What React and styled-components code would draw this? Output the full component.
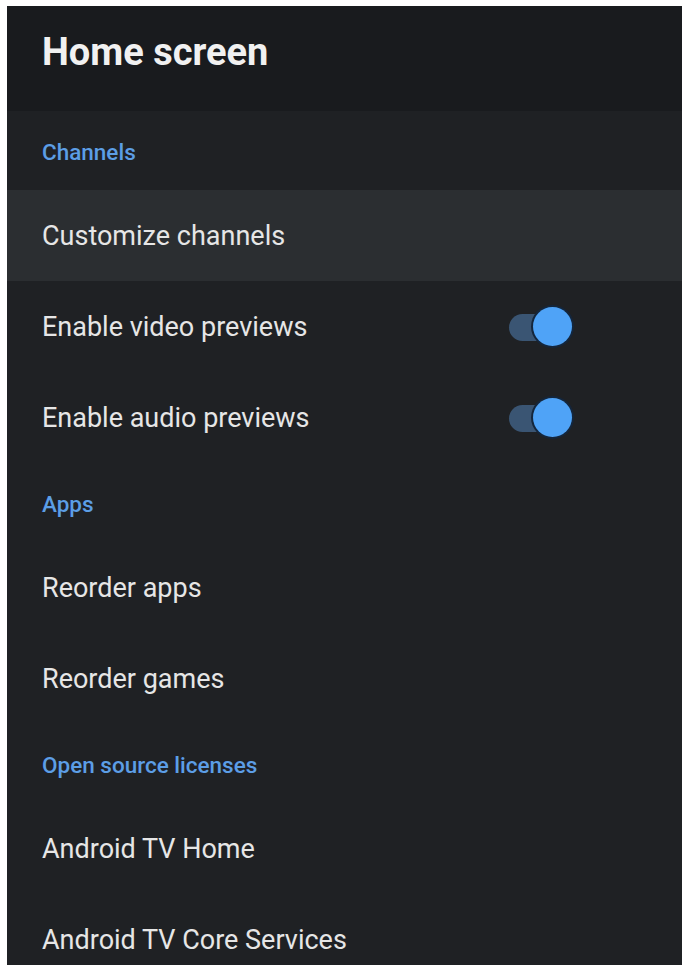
import styled, { createGlobalStyle } from 'styled-components';

const GlobalStyle = createGlobalStyle`
  html, body {
    margin: 0;
    padding: 0;
    background: #ffffff;
  }
  body {
    font-family: Roboto, "Noto Sans", sans-serif;
  }
`;

const sections = [
  {
    title: 'Channels',
    items: [
      { label: 'Customize channels', focused: true },
      { label: 'Enable video previews', toggle: true },
      { label: 'Enable audio previews', toggle: true },
    ],
  },
  {
    title: 'Apps',
    items: [{ label: 'Reorder apps' }, { label: 'Reorder games' }],
  },
  {
    title: 'Open source licenses',
    items: [{ label: 'Android TV Home' }, { label: 'Android TV Core Services' }],
  },
];

export default function App() {
  return (
    <>
      <GlobalStyle />
      <Page>
        <Panel>
          <Header>
            <Title>Home screen</Title>
          </Header>
          <List>
            {sections.map((section) => (
              <div key={section.title}>
                <SectionTitle>{section.title}</SectionTitle>
                {section.items.map((item) => (
                  <Row key={item.label} $focused={item.focused}>
                    <Label>{item.label}</Label>
                    {item.toggle && (
                      <Switch>
                        <Track />
                        <Thumb />
                      </Switch>
                    )}
                  </Row>
                ))}
              </div>
            ))}
          </List>
        </Panel>
      </Page>
    </>
  );
}

const Page = styled.div`
  width: 687px;
  height: 970px;
  padding: 6px 5px 5px 7px;
  box-sizing: border-box;
`;

const Panel = styled.div`
  height: 100%;
  background: #1f2124;
  overflow: hidden;
  display: flex;
  flex-direction: column;
`;

const Header = styled.div`
  height: 105px;
  flex-shrink: 0;
  background: #191b1e;
  display: flex;
  align-items: flex-start;
  padding: 24px 0 0 35px;
  box-sizing: border-box;
`;

const Title = styled.h1`
  margin: 0;
  font-size: 38px;
  font-weight: 700;
  color: #f1f1f1;
  line-height: 44px;
`;

const List = styled.div`
  display: flex;
  flex-direction: column;
`;

const SectionTitle = styled.div`
  height: 79px;
  padding: 27px 0 0 35px;
  box-sizing: border-box;
  font-size: 22.5px;
  font-weight: 500;
  color: #5c9ee6;
  line-height: 28px;
`;

const Row = styled.div`
  height: 91px;
  display: flex;
  align-items: center;
  justify-content: space-between;
  padding: 0 110px 0 35px;
  box-sizing: border-box;
  background: ${(p) => (p.$focused ? '#2b2e31' : 'transparent')};
`;

const Label = styled.span`
  font-size: 27px;
  color: #e6e6e6;
  line-height: 32px;
`;

const Switch = styled.div`
  position: relative;
  width: 63px;
  height: 40px;
  flex-shrink: 0;
`;

const Track = styled.div`
  position: absolute;
  left: 0;
  top: 7px;
  width: 46px;
  height: 27px;
  border-radius: 14px;
  background: #3a5573;
`;

const Thumb = styled.div`
  position: absolute;
  right: 0;
  top: 0;
  width: 39px;
  height: 39px;
  border-radius: 50%;
  background: #4fa3f7;
  box-shadow: 0 0 0 2px #14263c;
`;
